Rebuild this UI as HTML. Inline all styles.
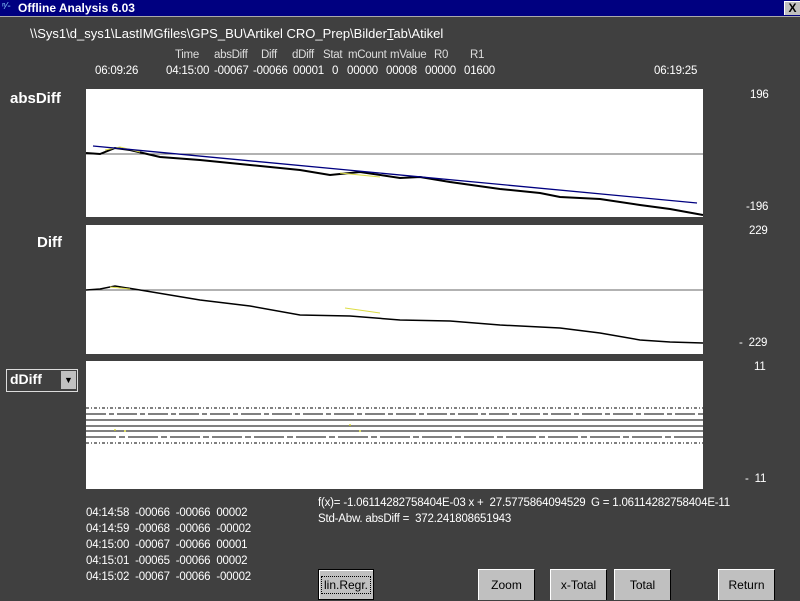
<!DOCTYPE html>
<html><head><meta charset="utf-8"><style>
body{margin:0;width:800px;height:600px;background:#404040;position:relative;overflow:hidden;font-family:"Liberation Sans",sans-serif;font-size:12px;color:#fff}
.a{position:absolute;white-space:pre}
.t{position:absolute;left:0;top:0;width:800px;height:16px;background:#000080}
.btn{position:absolute;top:569px;height:31px;background:#c0c0c0;color:#000;text-align:center;line-height:31px;border-top:1px solid #fff;border-left:1px solid #fff;border-right:1px solid #000;box-sizing:border-box}
.p{position:absolute;left:86px;width:617px;background:#fff}
.h{color:#ddd;font-size:11.5px;letter-spacing:-0.3px}
.v{font-size:11.5px;letter-spacing:-0.2px}
</style></head><body>
<div class="t"></div>
<div class="a" style="left:18px;top:1px;font-weight:bold;font-size:12px">Offline Analysis 6.03</div>
<div class="a" style="left:2px;top:1px;font-size:10px;color:#8cf">ⁿ⁄-</div>
<div class="a" style="left:784px;top:1px;width:15px;height:13px;background:#c0c0c0;color:#000;font-weight:bold;text-align:center;line-height:13px;border-top:1px solid #fff;border-left:1px solid #fff">X</div>
<div class="a" style="left:0;top:16px;width:800px;height:1px;background:#aaa"></div>
<div class="a" style="left:30px;top:26px;font-size:13px">\\Sys1\d_sys1\LastIMGfiles\GPS_BU\Artikel CRO_Prep\Bilder<u>T</u>ab\Atikel</div>
<div class="a h" style="left:175px;top:49px">Time</div>
<div class="a h" style="left:214px;top:49px">absDiff</div>
<div class="a h" style="left:261px;top:49px">Diff</div>
<div class="a h" style="left:292px;top:49px">dDiff</div>
<div class="a h" style="left:323px;top:49px">Stat</div>
<div class="a h" style="left:348px;top:49px">mCount</div>
<div class="a h" style="left:390px;top:49px">mValue</div>
<div class="a h" style="left:434px;top:49px">R0</div>
<div class="a h" style="left:470px;top:49px">R1</div>
<div class="a v" style="left:95px;top:65px">06:09:26</div>
<div class="a v" style="left:166px;top:65px">04:15:00</div>
<div class="a v" style="left:214px;top:65px">-00067</div>
<div class="a v" style="left:253px;top:65px">-00066</div>
<div class="a v" style="left:293px;top:65px">00001</div>
<div class="a v" style="left:332px;top:65px">0</div>
<div class="a v" style="left:347px;top:65px">00000</div>
<div class="a v" style="left:386px;top:65px">00008</div>
<div class="a v" style="left:425px;top:65px">00000</div>
<div class="a v" style="left:464px;top:65px">01600</div>
<div class="a v" style="left:654px;top:65px">06:19:25</div>
<div class="a v" style="left:750px;top:89px">196</div>
<div class="a v" style="left:746px;top:201px">-196</div>
<div class="a v" style="left:749px;top:225px">229</div>
<div class="a v" style="left:739px;top:337px">-  229</div>
<div class="a v" style="left:754px;top:361px">11</div>
<div class="a v" style="left:745px;top:473px">-  11</div>
<div class="a" style="left:10px;top:90px;font-weight:bold;font-size:15px">absDiff</div>
<div class="a" style="left:37px;top:234px;font-weight:bold;font-size:15px">Diff</div>
<div class="a" style="left:6px;top:369px;width:72px;height:23px;background:#404040;border:1px solid #ddd;box-sizing:border-box"></div>
<div class="a" style="left:10px;top:371px;font-weight:bold;font-size:14px">dDiff</div>
<div class="a" style="left:61px;top:371px;width:15px;height:18px;background:#c0c0c0;color:#000;font-size:9px;text-align:center;line-height:18px">▼</div>
<div class="p" style="top:89px;height:128px"></div>
<div class="p" style="top:225px;height:129px"></div>
<div class="p" style="top:361px;height:128px"></div>
<svg class="a" style="left:0;top:0" width="800" height="600">
<line x1="86" y1="154" x2="703" y2="154" stroke="#666"/>
<line x1="86" y1="290" x2="703" y2="290" stroke="#666"/>
<polyline fill="none" stroke="#000" stroke-width="2" points="86,153 100,154 115,148 130,150 160,157 200,160 250,165 300,170 330,175 360,172 400,178 420,177 450,182 500,189 540,193 560,197 600,199 640,205 670,209 703,215"/>
<polyline fill="none" stroke="#dd4" stroke-width="1" points="105,150 120,147 140,152"/>
<polyline fill="none" stroke="#dd4" stroke-width="1" points="340,173 380,177"/>
<line x1="93" y1="146" x2="697" y2="203" stroke="#000080" stroke-width="1.3"/>
<polyline fill="none" stroke="#000" stroke-width="1.5" points="86,290 100,289 115,286 140,290 200,300 250,306 300,315 350,316 400,320 450,321 500,325 560,328 600,333 640,340 670,342 703,343"/>
<polyline fill="none" stroke="#dd4" stroke-width="1" points="110,287 130,289"/>
<polyline fill="none" stroke="#dd4" stroke-width="1" points="345,308 380,313"/>
<g stroke="#000" stroke-width="1">
<line x1="86" y1="408" x2="703" y2="408" stroke-dasharray="3,2,1,2"/>
<line x1="86" y1="414" x2="703" y2="414" stroke-dasharray="20,3,5,3"/>
<line x1="86" y1="420" x2="703" y2="420"/>
<line x1="86" y1="426" x2="703" y2="426"/>
<line x1="86" y1="431" x2="703" y2="431"/>
<line x1="86" y1="437" x2="703" y2="437" stroke-dasharray="30,3,6,3"/>
<line x1="86" y1="443" x2="703" y2="443" stroke-dasharray="3,2,1,2"/>
</g>
<g fill="#dd4"><circle cx="115" cy="430" r="1"/><circle cx="125" cy="431" r="1"/><circle cx="350" cy="425" r="1"/><circle cx="360" cy="431" r="1"/></g>
</svg>
<div class="a v" style="left:86px;top:505px;line-height:16px">04:14:58  -00066  -00066  00002
04:14:59  -00068  -00066  -00002
04:15:00  -00067  -00066  00001
04:15:01  -00065  -00066  00002
04:15:02  -00067  -00066  -00002</div>
<div class="a v" style="left:318px;top:497px">f(x)= -1.06114282758404E-03 x +  27.5775864094529</div>
<div class="a v" style="left:591px;top:497px">G = 1.06114282758404E-11</div>
<div class="a v" style="left:318px;top:513px">Std-Abw. absDiff =  372.241808651943</div>
<div class="btn" style="left:318px;width:56px;border:1px solid #000;box-shadow:inset 1px 1px #fff"><span style="outline:1px dotted #000;padding:1px 2px">lin.Regr.</span></div>
<div class="btn" style="left:478px;width:57px">Zoom</div>
<div class="btn" style="left:550px;width:57px">x-Total</div>
<div class="btn" style="left:614px;width:57px">Total</div>
<div class="btn" style="left:718px;width:57px">Return</div>
</body></html>
